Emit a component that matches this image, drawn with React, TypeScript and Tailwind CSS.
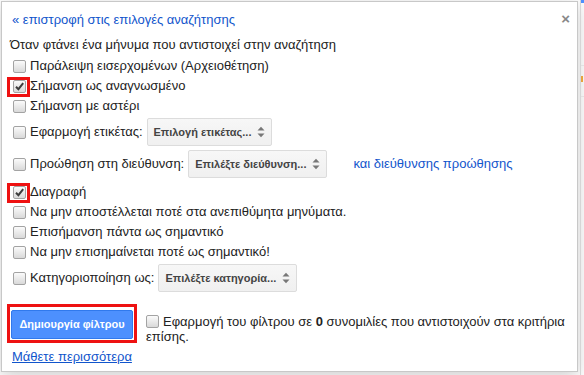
import type { ReactNode } from 'react'

function Checkbox({ checked = false, marked = false, className = '' }: { checked?: boolean; marked?: boolean; className?: string }) {
  return (
    <span
      className={`relative inline-block w-[13px] h-[13px] shrink-0 rounded-[2px] border border-[#a3a3a3] bg-linear-to-b from-[#fbfbfb] to-[#d9d9d9] ${className}`}
    >
      {checked && (
        <svg viewBox="0 0 13 13" className="absolute -left-px -top-px w-[13px] h-[13px]">
          <path d="M3 6.8 L5.4 9.2 L10.2 3.2" fill="none" stroke="#3d3d3d" strokeWidth="2" />
        </svg>
      )}
      {marked && (
        <span className="absolute -left-[7px] -top-[4px] w-[23px] h-[20px] border-[3px] border-[#ee1111]" />
      )}
    </span>
  )
}

function Row({ children, tall = false, checked = false, marked = false }: { children: ReactNode; tall?: boolean; checked?: boolean; marked?: boolean }) {
  return (
    <div className={`flex items-center ${tall ? 'h-[32px]' : 'h-[20px]'}`}>
      <Checkbox checked={checked} marked={marked} className="ml-[3px]" />
      <div className="ml-[4px] flex items-center">{children}</div>
    </div>
  )
}

function Select({ label }: { label: string }) {
  return (
    <div className="ml-[4px] flex h-[28px] items-center gap-[6px] rounded-[2px] border border-[#dcdcdc] bg-linear-to-b from-[#f7f7f7] to-[#f0f0f0] pl-[6px] pr-[6px] text-[11px] font-bold text-[#444]">
      <span>{label}</span>
      <svg viewBox="0 0 8 12" className="w-[8px] h-[12px]">
        <path d="M0.5 4.5 L4 0.8 L7.5 4.5 Z" fill="#777" />
        <path d="M0.5 7.5 L4 11.2 L7.5 7.5 Z" fill="#777" />
      </svg>
    </div>
  )
}

export default function App() {
  return (
    <div className="flex h-[375px] w-[584px] bg-white font-[Liberation_Sans,Arial,sans-serif] text-[13px] text-[#222]">
      <div className="ml-px mt-px h-[371px] w-[577px] shrink-0 border border-[#c8c8c8] bg-white pl-[8px] shadow-[0_4px_16px_rgba(0,0,0,0.2)]">
        <div className="flex h-[35px] items-start justify-between pt-[10px] pr-[7px]">
          <a className="ml-[2px] leading-[16px] text-[#15c]">« επιστροφή στις επιλογές αναζήτησης</a>
          <span className="mt-[-1px] text-[15px] font-bold leading-[16px] text-[#888]">×</span>
        </div>
        <div className="h-[16px] leading-[16px]">Όταν φτάνει ένα μήνυμα που αντιστοιχεί στην αναζήτηση</div>

        <div className="mt-[3px]">
          <Row>Παράλειψη εισερχομένων (Αρχειοθέτηση)</Row>
          <Row checked marked>Σήμανση ως αναγνωσμένο</Row>
          <Row>Σήμανση με αστέρι</Row>
          <Row tall>
            <span>Εφαρμογή ετικέτας:</span>
            <Select label="Επιλογή ετικέτας..." />
          </Row>
          <Row tall>
            <span>Προώθηση στη διεύθυνση:</span>
            <Select label="Επιλέξτε διεύθυνση..." />
            <a className="ml-[26px] text-[#15c]">και διεύθυνσης προώθησης</a>
          </Row>
          <div className="h-[2px]" />
          <Row checked marked>Διαγραφή</Row>
          <Row>Να μην αποστέλλεται ποτέ στα ανεπιθύμητα μηνύματα.</Row>
          <Row>Επισήμανση πάντα ως σημαντικό</Row>
          <Row>Να μην επισημαίνεται ποτέ ως σημαντικό!</Row>
          <Row tall>
            <span>Κατηγοριοποίηση ως:</span>
            <Select label="Επιλέξτε κατηγορία..." />
          </Row>
        </div>

        <div className="mt-[16px] flex items-start">
          <div className="relative ml-px">
            <button className="h-[29px] w-[122px] rounded-[2px] border border-[#3079ed] bg-[#4d90fe] text-[11px] font-bold text-white">
              Δημιουργία φίλτρου
            </button>
            <span className="absolute -left-[4px] -right-[4px] -top-[6px] -bottom-[4px] border-[3px] border-[#ee1111]" />
          </div>
          <div className="ml-[13px] mt-[4px] pr-[6px] leading-[15px]">
            <Checkbox className="mr-[4px] align-[-2px]" />
            Εφαρμογή του φίλτρου σε <b>0</b> συνομιλίες που αντιστοιχούν στα κριτήρια επίσης.
          </div>
        </div>
        <a className="mt-[5px] ml-[2px] inline-block leading-[16px] text-[#15c] underline">Μάθετε περισσότερα</a>
      </div>
      <div className="ml-[2px] flex h-full w-[4px] flex-col border-l border-[#d6d6d6]">
        <div className="h-[3px] bg-[#4d90fe]" />
        <div className="mt-[62px] h-px bg-[#e2e2e2]" />
        <div className="mt-[10px] h-[6px] w-[2px] bg-[#e8a33a]" />
        <div className="mt-[14px] h-px bg-[#e2e2e2]" />
      </div>
    </div>
  )
}
